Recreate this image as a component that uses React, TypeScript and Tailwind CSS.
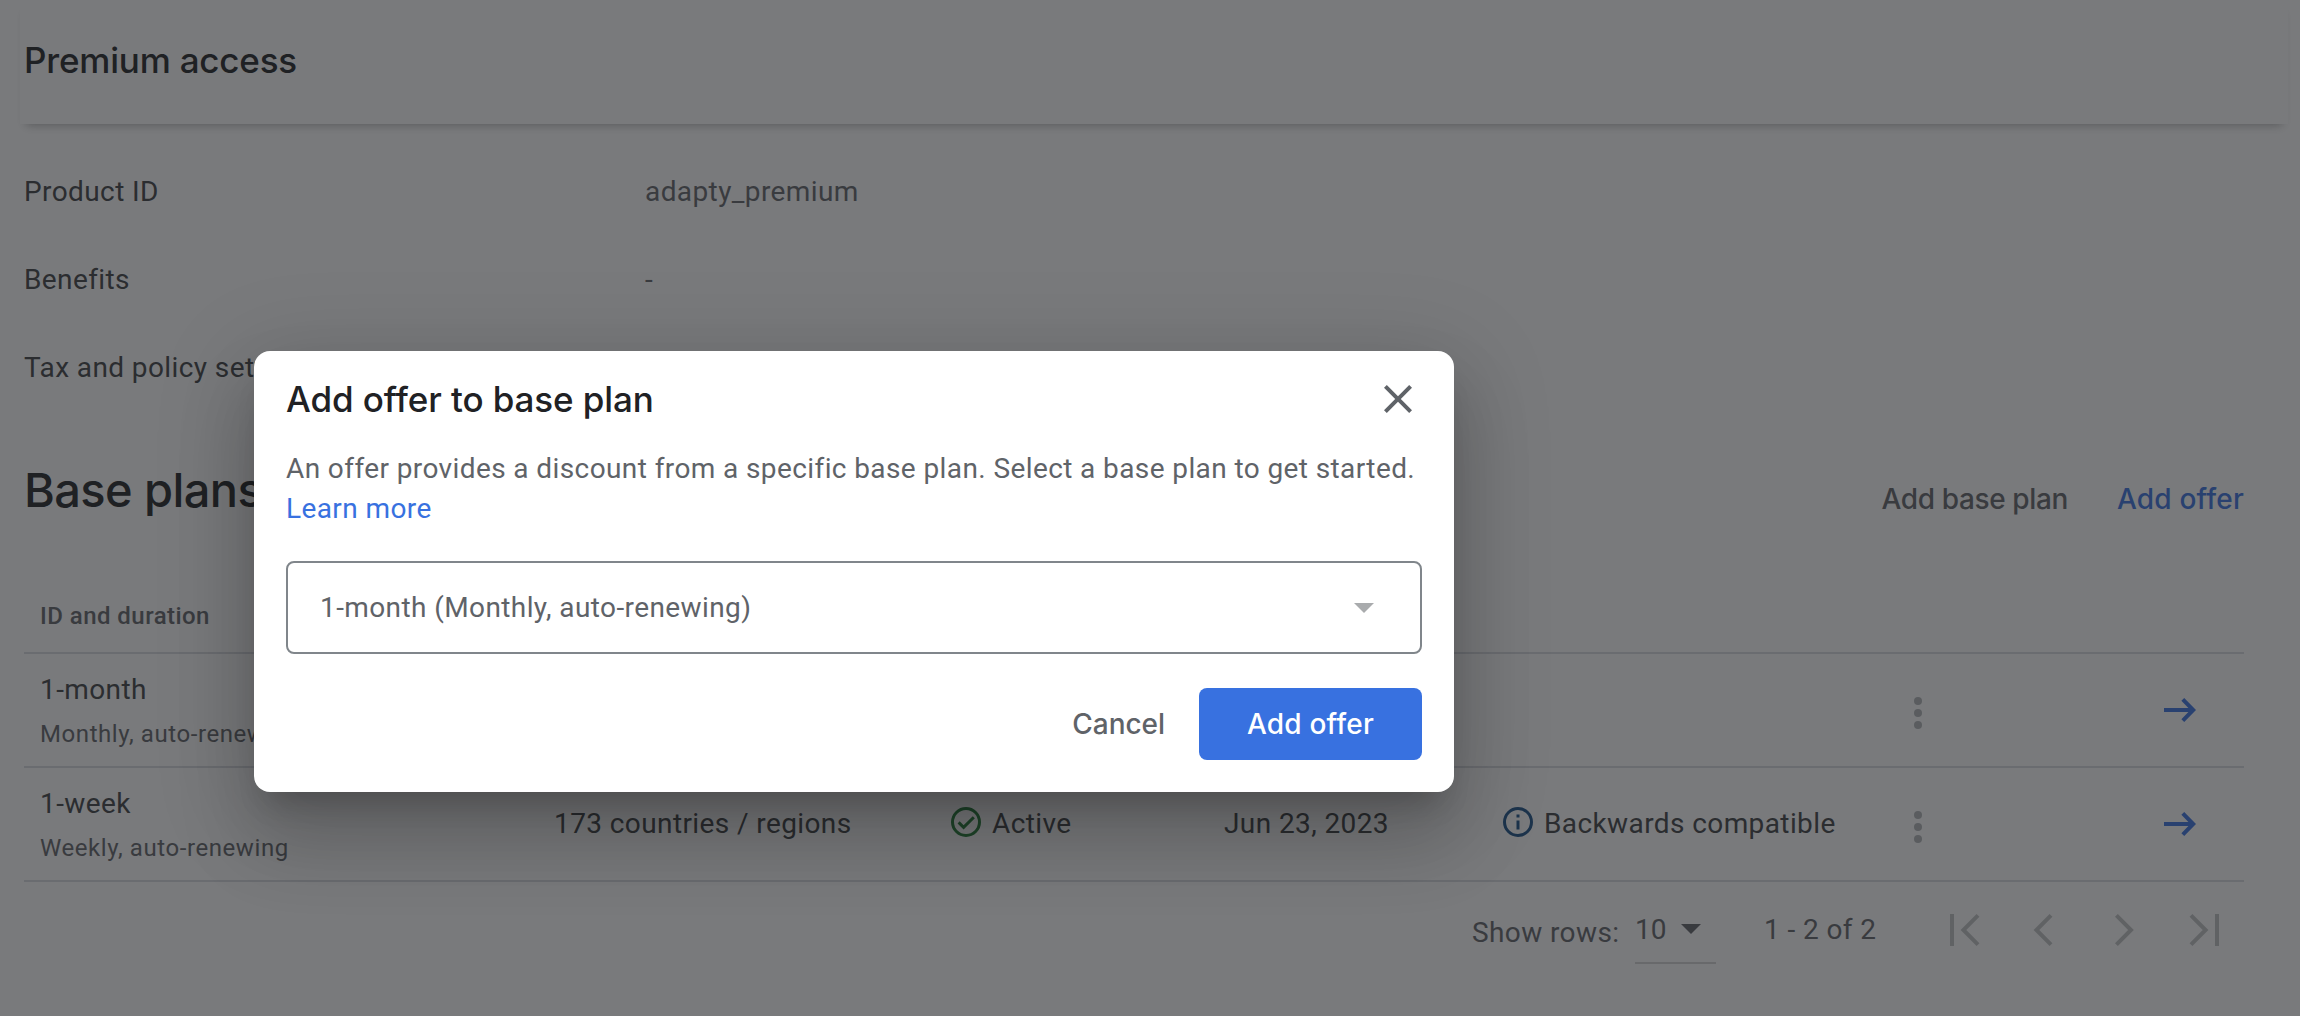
import type { ReactNode } from 'react';

const details = [
  { label: 'Product ID', value: 'adapty_premium' },
  { label: 'Benefits', value: '-' },
  { label: 'Tax and policy settings', value: '' },
];

type Plan = {
  id: string;
  duration: string;
  regions?: string;
  status?: string;
  updated?: string;
  note?: string;
};

const plans: Plan[] = [
  { id: '1-month', duration: 'Monthly, auto-renewing' },
  {
    id: '1-week',
    duration: 'Weekly, auto-renewing',
    regions: '173 countries / regions',
    status: 'Active',
    updated: 'Jun 23, 2023',
    note: 'Backwards compatible',
  },
];

function CheckCircle() {
  return (
    <svg className="mb-1 size-[30px] shrink-0" viewBox="0 0 30 30" fill="none" stroke="#1f7a33" strokeWidth="3">
      <circle cx="15" cy="15" r="13.5" />
      <path d="M7.6 15.4l5 5L22.8 10.2" />
    </svg>
  );
}

function InfoCircle() {
  return (
    <svg className="mb-1 size-[30px] shrink-0" viewBox="0 0 30 30" fill="none" stroke="#1a5088" strokeWidth="3">
      <circle cx="15" cy="15" r="13.5" />
      <path d="M15 13.5v9M15 7.5v3" />
    </svg>
  );
}

function MoreDots() {
  return (
    <svg className="mt-1.5 h-8 w-2" viewBox="0 0 8 32" fill="#b1b5b7">
      <circle cx="4" cy="4" r="4" />
      <circle cx="4" cy="16" r="4" />
      <circle cx="4" cy="28" r="4" />
    </svg>
  );
}

function ArrowRight() {
  return (
    <svg className="h-6 w-8" viewBox="0 0 32 24" fill="none" stroke="#3871e0" strokeWidth="4">
      <path d="M0 12h28M18.8 1.4L29.2 12 18.8 22.6" />
    </svg>
  );
}

function PageButton({ path, label }: { path: string; label: string }) {
  return (
    <button className="flex h-12 w-20 items-center justify-center" aria-label={label}>
      <svg className="h-8 w-10" viewBox="0 0 40 32" fill="none" stroke="#c1c3c4" strokeWidth="4">
        <path d={path} />
      </svg>
    </button>
  );
}

function Cell({ children, className = '' }: { children?: ReactNode; className?: string }) {
  return <div className={`flex items-center gap-[11px] ${className}`}>{children}</div>;
}

function PlanRow({ plan }: { plan: Plan }) {
  return (
    <div className="grid h-[114px] grid-cols-[530px_397px_273px_279px_411px_1fr] border-b-2 border-[#dadce0] whitespace-nowrap">
      <div className="flex flex-col gap-1 pt-4 pl-4 leading-10">
        <span>{plan.id}</span>
        <span className="text-2xl leading-10 tracking-[0.58px] text-[#5f6368]">{plan.duration}</span>
      </div>
      <Cell>{plan.regions}</Cell>
      <Cell>
        {plan.status && (
          <>
            <CheckCircle />
            {plan.status}
          </>
        )}
      </Cell>
      <Cell>{plan.updated}</Cell>
      <Cell>
        {plan.note && (
          <>
            <InfoCircle />
            {plan.note}
          </>
        )}
      </Cell>
      <Cell className="justify-between pr-12">
        <MoreDots />
        <ArrowRight />
      </Cell>
    </div>
  );
}

function ProductPage() {
  return (
    <main className="h-full overflow-hidden bg-white">
      <header className="mr-3 ml-5 flex h-[124px] items-center bg-white pb-[3px] pl-1 shadow-[0_7px_9px_-6px_rgba(0,0,0,0.32)]">
        <h1 className="font-[Inter,sans-serif] text-[35px] font-[550] tracking-[-0.2px] text-[#202124]">Premium access</h1>
      </header>

      <div className="mr-14 ml-6">
        <dl className="pt-6">
          {details.map((d) => (
            <div key={d.label} className="grid h-[88px] grid-cols-[621px_1fr] items-center">
              <dt>{d.label}</dt>
              <dd className="text-[#5f6368]">{d.value}</dd>
            </div>
          ))}
        </dl>

        <div className="flex h-[166px] items-start justify-between font-[Inter,sans-serif]">
          <h2 className="pt-12 text-[47px] leading-[60px] font-[550] tracking-[-0.6px] text-[#202124]">Base plans</h2>
          <div className="flex gap-[49px] pt-[67px] text-[28px] leading-10 font-medium">
            <button className="tracking-[-0.38px] text-[#5f6368]">Add base plan</button>
            <button className="tracking-[0.2px] text-[#3871e0]">Add offer</button>
          </div>
        </div>

        <div className="flex h-[76px] items-center border-b-2 border-[#dadce0] pt-0.5 pl-4 text-2xl font-medium tracking-[0.45px] text-[#5f6368]">
          ID and duration
        </div>
        {plans.map((p) => (
          <PlanRow key={p.id} plan={p} />
        ))}

        <div className="flex h-24 items-center justify-end text-[#5f6368]">
          <span className="w-[163px] pt-1.5">Show rows:</span>
          <button className="flex h-[68px] w-[81px] items-center gap-[15px] border-b-2 border-[#d4d4d4] tracking-normal">
            <span className="pt-px">10</span>
            <svg className="h-2.5 w-5" viewBox="0 0 20 10" fill="#5f6368">
              <path d="M0 0h20L10 10z" />
            </svg>
          </button>
          <span className="ml-12 w-40">1 - 2 of 2</span>
          <PageButton label="First page" path="M8 0v32M34 1.4L19.4 16 34 30.6" />
          <PageButton label="Previous page" path="M27 1.4L12.4 16 27 30.6" />
          <PageButton label="Next page" path="M12.4 1.4L27 16 12.4 30.6" />
          <PageButton label="Last page" path="M7 1.4L21.6 16 7 30.6M33 0v32" />
        </div>
      </div>
    </main>
  );
}

function AddOfferDialog() {
  return (
    <div
      role="dialog"
      className="h-[441px] w-[1200px] rounded-2xl bg-white px-8 pt-6 text-[#5f6368] shadow-[0_22px_30px_-14px_rgba(0,0,0,0.2),0_48px_76px_6px_rgba(0,0,0,0.14),0_18px_92px_16px_rgba(0,0,0,0.12)]"
    >
      <div className="flex h-12 items-center justify-between">
        <h2 className="font-[Inter,sans-serif] text-[35px] leading-[48px] font-[550] tracking-[-0.1px] text-[#202124]">
          Add offer to base plan
        </h2>
        <button aria-label="Close">
          <svg className="size-12" viewBox="0 0 24 24" fill="#5f6368">
            <path d="M19 6.41L17.59 5 12 10.59 6.41 5 5 6.41 10.59 12 5 17.59 6.41 19 12 13.41 17.59 19 19 17.59 13.41 12z" />
          </svg>
        </button>
      </div>
      <p className="mt-[26px] leading-10">
        An offer provides a discount from a specific base plan. Select a base plan to get started.
        <br />
        <a className="text-[#3871e0]">Learn more</a>
      </p>
      <button className="mt-8 flex h-[93px] w-full items-center justify-between rounded-lg border-2 border-[#80868b] pr-[46px] pl-8">
        1-month (Monthly, auto-renewing)
        <svg className="h-2.5 w-5" viewBox="0 0 20 10" fill="#a9abad">
          <path d="M0 0h20L10 10z" />
        </svg>
      </button>
      <div className="mt-[34px] flex h-[72px] items-center justify-end font-[Inter,sans-serif] text-[28px] font-medium">
        <button className="mr-[34px] tracking-[-0.05px]">Cancel</button>
        <button className="h-full w-[223px] rounded-lg bg-[#3871e0] tracking-[0.2px] text-white">Add offer</button>
      </div>
    </div>
  );
}

export default function App() {
  return (
    <div className="relative h-[1016px] w-[2300px] overflow-hidden font-[Roboto,sans-serif] text-[28px] tracking-[0.4px] text-[#3c4043]">
      <ProductPage />
      <div className="absolute inset-0 bg-[rgba(32,33,36,0.6)] pt-[351px] pl-[254px]">
        <AddOfferDialog />
      </div>
    </div>
  );
}
